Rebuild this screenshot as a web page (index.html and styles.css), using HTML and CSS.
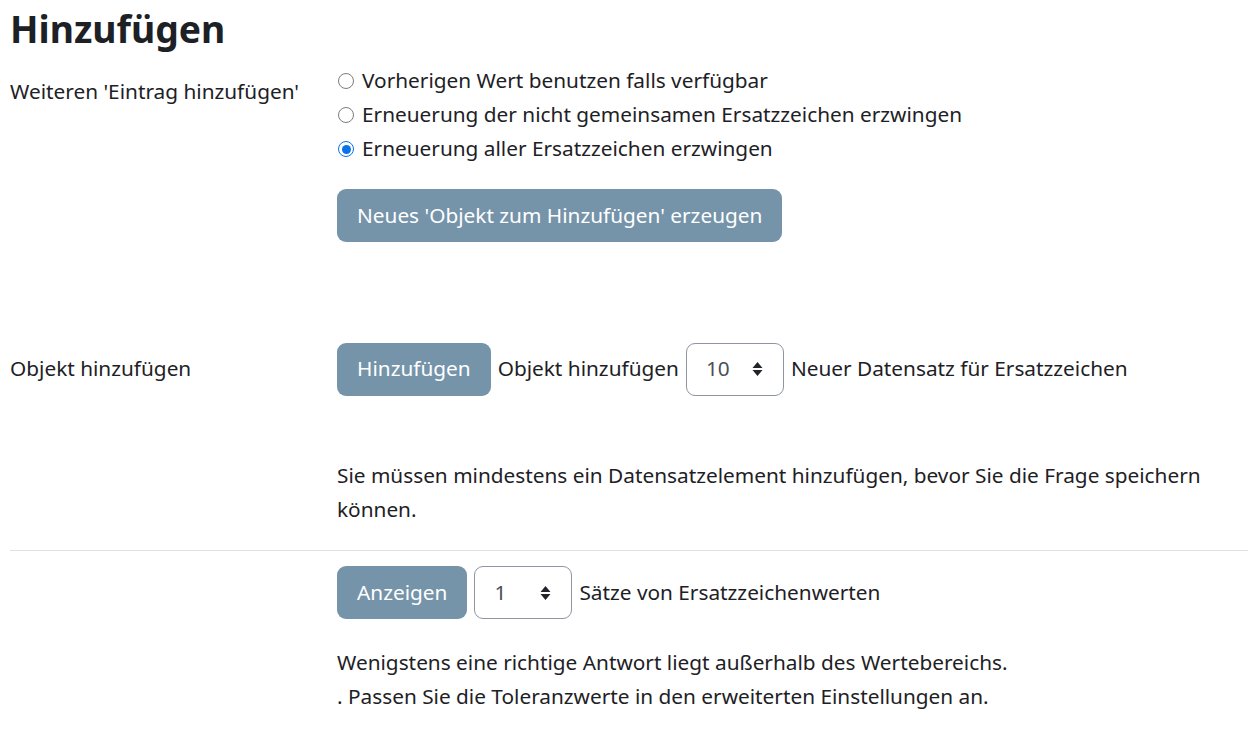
FILE: index.html
```html
<!DOCTYPE html>
<html lang="de">
<head>
<meta charset="utf-8">
<link rel="stylesheet" href="styles.css">
</head>
<body>
<div class="page">
  <h2 class="title">Hinzufügen</h2>

  <div class="row row-radios">
    <div class="label">Weiteren 'Eintrag hinzufügen'</div>
    <div class="field">
      <label class="radio"><span class="dot"></span>Vorherigen Wert benutzen falls verfügbar</label>
      <label class="radio"><span class="dot"></span>Erneuerung der nicht gemeinsamen Ersatzzeichen erzwingen</label>
      <label class="radio"><span class="dot checked"></span>Erneuerung aller Ersatzzeichen erzwingen</label>
      <div class="btn-wrap"><span class="btn">Neues 'Objekt zum Hinzufügen' erzeugen</span></div>
    </div>
  </div>

  <div class="row row-add">
    <div class="label label-mid">Objekt hinzufügen</div>
    <div class="field">
      <div class="inline">
        <span class="btn">Hinzufügen</span>
        <span>Objekt hinzufügen</span>
        <span class="select sel-10">10<svg class="caret" viewBox="0 0 10 16" width="11" height="16"><path d="M5 1 L10 7 H0 Z M0 9 H10 L5 15 Z" fill="#212529"/></svg></span>
        <span>Neuer Datensatz für Ersatzzeichen</span>
      </div>
      <p class="note">Sie müssen mindestens ein Datensatzelement hinzufügen, bevor Sie die Frage speichern können.</p>
    </div>
  </div>

  <hr class="sep">

  <div class="row row-show">
    <div class="label"></div>
    <div class="field">
      <div class="inline">
        <span class="btn">Anzeigen</span>
        <span class="select sel-1">1<svg class="caret" viewBox="0 0 10 16" width="11" height="16"><path d="M5 1 L10 7 H0 Z M0 9 H10 L5 15 Z" fill="#212529"/></svg></span>
        <span>Sätze von Ersatzzeichenwerten</span>
      </div>
      <p class="note note2">Wenigstens eine richtige Antwort liegt außerhalb des Wertebereichs.<br>. Passen Sie die Toleranzwerte in den erweiterten Einstellungen an.</p>
    </div>
  </div>
</div>
</body>
</html>
```

FILE: styles.css
```css
html, body {
  margin: 0;
  padding: 0;
  background: #fff;
}
body {
  font-family: "Noto Sans", "Open Sans", sans-serif;
  font-size: 20.8px;
  line-height: 33.75px;
  color: #1d2125;
}
.page {
  padding: 0 0 0 10px;
}
.title {
  margin: 0;
  padding-top: 2px;
  font-size: 37.3px;
  line-height: 54px;
  font-weight: 700;
  color: #1d2125;
}
.row {
  display: grid;
  grid-template-columns: 327px 1fr;
}
.row-radios {
  margin-top: 8px;
}
.label {
  padding-top: 11px;
}
.radio {
  display: flex;
  align-items: center;
  height: 34px;
}
.dot {
  width: 14px;
  height: 14px;
  border: 1.5px solid #7d7d7d;
  border-radius: 50%;
  margin: 0 8px 0 1px;
  box-sizing: content-box;
  position: relative;
}
.dot.checked {
  border-color: #0b72e7;
}
.dot.checked::after {
  content: "";
  position: absolute;
  left: 2.5px;
  top: 2.5px;
  width: 9px;
  height: 9px;
  border-radius: 50%;
  background: #0b72e7;
}
.btn-wrap {
  margin-top: 23px;
}
.btn {
  display: inline-block;
  background: #7594a9;
  color: #fff;
  border-radius: 9px;
  padding: 9.5px 20px;
  line-height: 33.75px;
}
.row-add {
  margin-top: 101px;
}
.label-mid {
  padding-top: 9px;
}
.inline {
  display: flex;
  align-items: center;
  gap: 7px;
}
.select {
  display: inline-flex;
  align-items: center;
  justify-content: space-between;
  box-sizing: border-box;
  height: 53px;
  border: 1px solid #8f959e;
  border-radius: 9px;
  padding: 0 20px 0 19px;
  color: #495057;
}
.sel-10 { width: 98px; }
.sel-1 { width: 98px; }
.caret { display: block; }
.note {
  margin: 63px 0 0 0;
  padding-right: 30px;
}
.sep {
  border: 0;
  border-top: 1px solid #dee2e6;
  margin: 24px 0 15px 0;
}
.note2 {
  margin-top: 27px;
}
```
